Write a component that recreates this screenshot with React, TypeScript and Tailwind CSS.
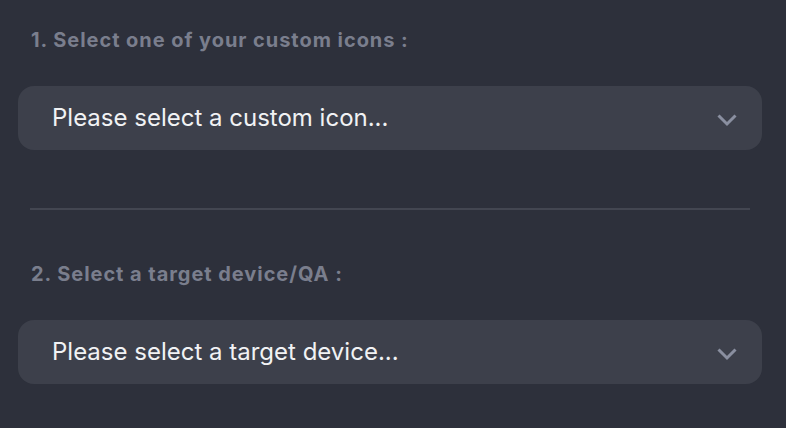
const Chevron = () => (
    <svg width="22" height="14" viewBox="0 0 22 14" fill="none" className="mt-1 shrink-0">
        <polyline points="2.5,2.5 11,11 19.5,2.5" stroke="#8a8fa0" strokeWidth="3" strokeLinecap="butt" strokeLinejoin="miter" />
    </svg>
);

const Field = ({ label, placeholder }: { label: string; placeholder: string }) => (
    <div className="flex flex-col">
        <div className="px-[13px] text-[20px] leading-[24px] font-bold tracking-[0.95px] text-[#7a7e8d]">{label}</div>
        <button className="mt-[34px] flex h-16 w-full items-center justify-between rounded-2xl bg-[#3d404b] pl-[34px] pr-6 text-left">
            <span className="text-[24px] leading-[28px] text-[#f1f2f4]">{placeholder}</span>
            <Chevron />
        </button>
    </div>
);

export default function App() {
    return (
        <div className="h-[428px] w-[786px] bg-[#2d303b] pl-[18px] pr-6 pt-[28px]" style={{ fontFamily: 'Inter, "Noto Sans", sans-serif' }}>
            <Field label="1. Select one of your custom icons :" placeholder="Please select a custom icon..." />
            <div className="mx-3 mt-[58px] mb-[52px] h-[2px] bg-[#434651]" />
            <Field label="2. Select a target device/QA :" placeholder="Please select a target device..." />
        </div>
    );
}
